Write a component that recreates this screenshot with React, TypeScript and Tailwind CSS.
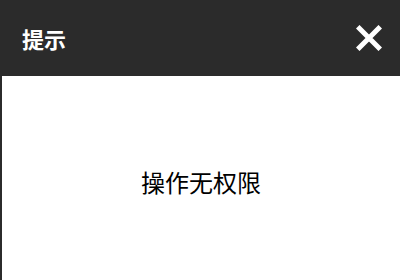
import * as React from "react";

function CloseIcon() {
  return (
    <svg width="26" height="26" viewBox="0 0 26 26" className="block">
      <path
        d="M3.5 3.5 L22.5 22.5 M22.5 3.5 L3.5 22.5"
        stroke="#ffffff"
        strokeWidth="5"
        strokeLinecap="square"
      />
    </svg>
  );
}

export default function App() {
  return (
    <div
      className="flex h-[280px] w-[400px] flex-col overflow-hidden bg-[#2b2b2b]"
      style={{ fontFamily: '"Noto Sans CJK SC", "Noto Sans", sans-serif' }}
    >
      <div className="flex h-[76px] shrink-0 items-center justify-between pl-[22px] pr-[18px]">
        <span className="text-[22px] font-bold leading-none text-white">提示</span>
        <button type="button" className="flex items-center justify-center">
          <CloseIcon />
        </button>
      </div>
      <div className="ml-[2px] flex flex-1 items-start justify-center bg-white pt-[94px]">
        <span className="text-[24px] leading-none text-black">操作无权限</span>
      </div>
    </div>
  );
}
